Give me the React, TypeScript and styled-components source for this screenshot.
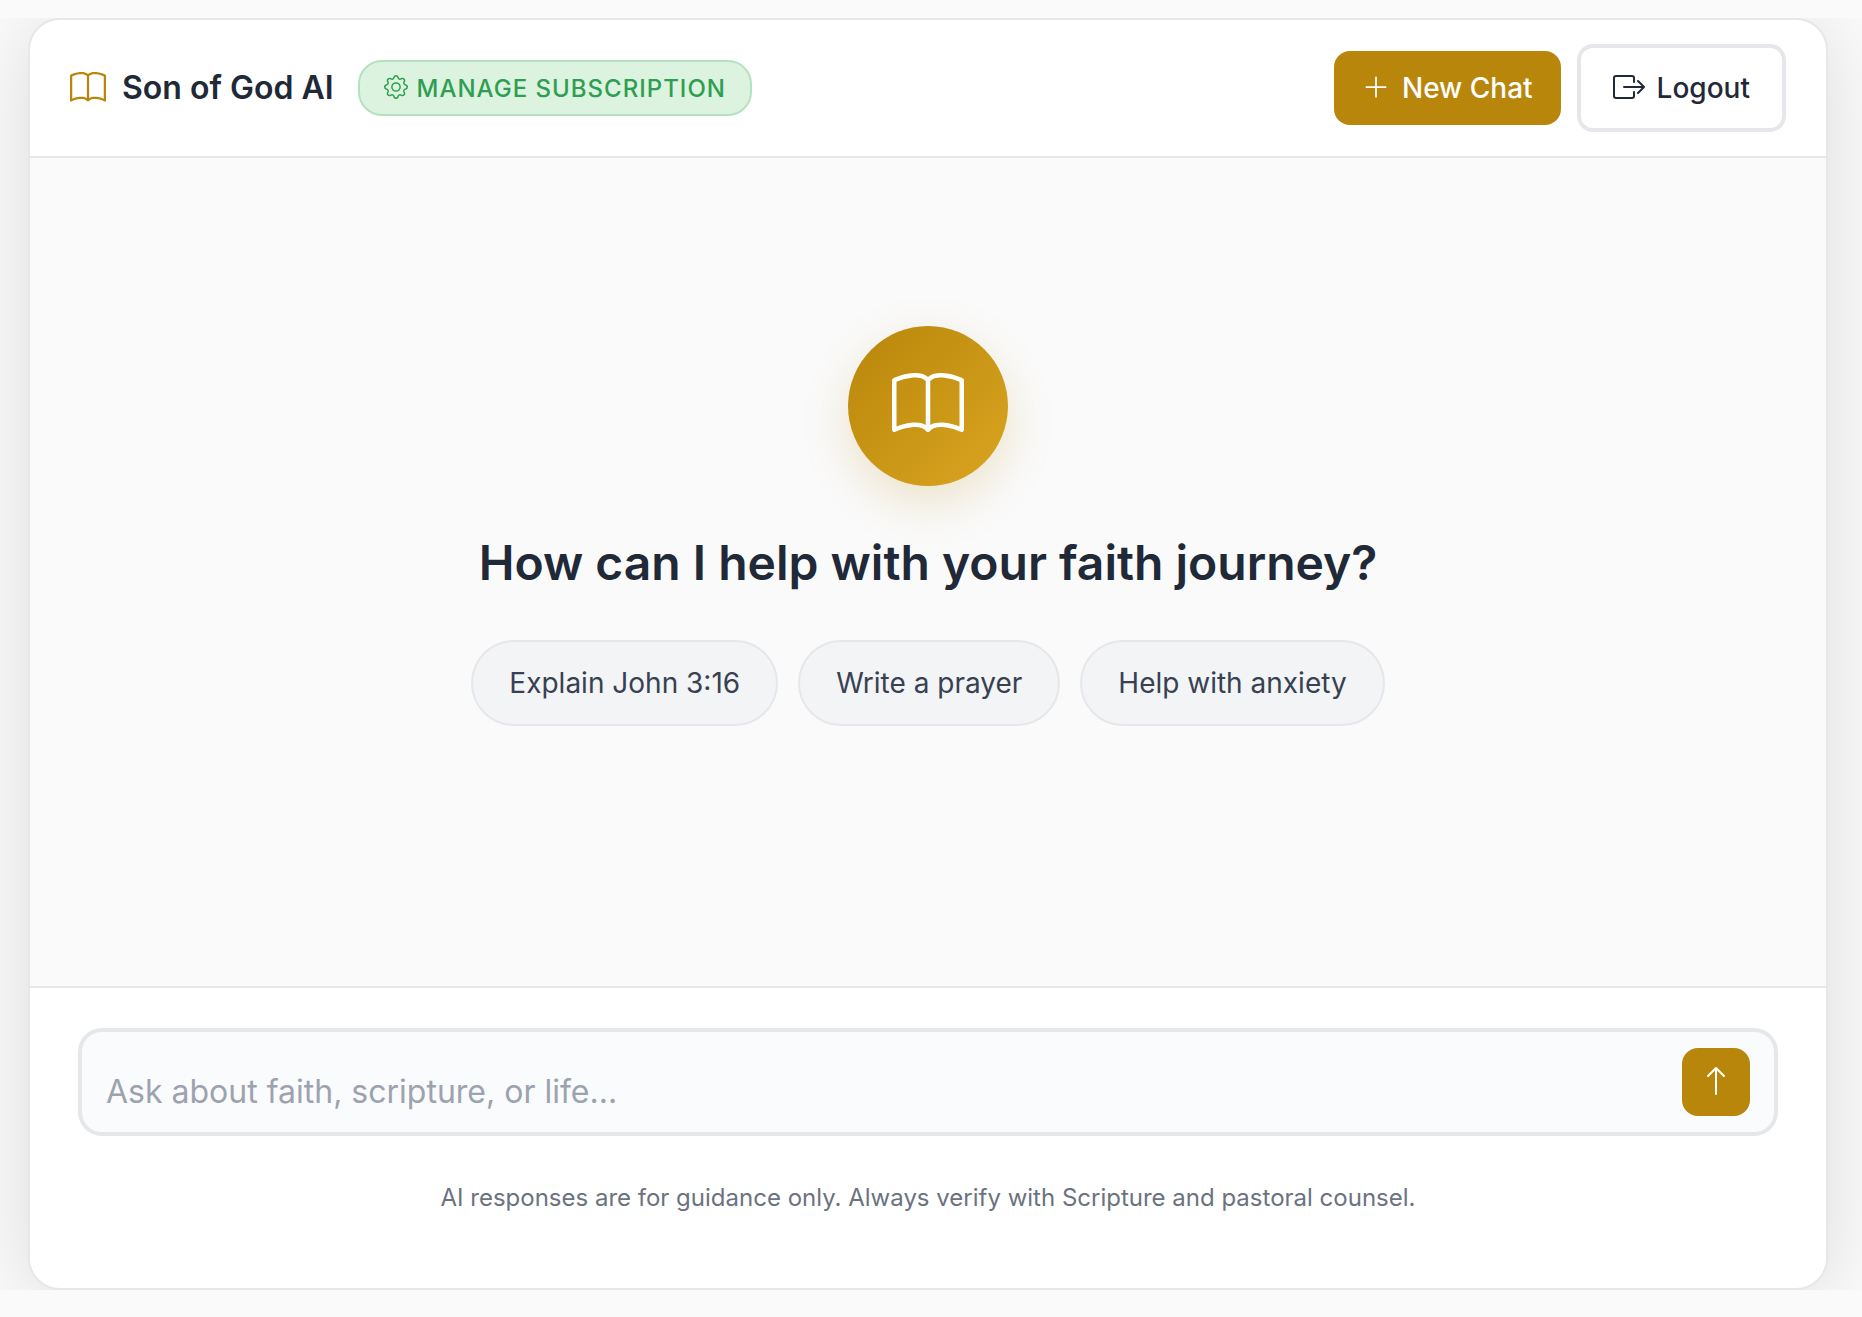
import React, { useState } from "react";
import styled, { createGlobalStyle } from "styled-components";
import { BsArrowUp, BsBook, BsBoxArrowRight, BsGear, BsPlusLg } from "react-icons/bs";

const GlobalStyle = createGlobalStyle`
  *, *::before, *::after { box-sizing: border-box; }
  body {
    margin: 0;
    background: #fafafa;
    color: #1f2937;
    font-family: Inter, "Liberation Sans", sans-serif;
  }
  button, textarea { font: inherit; }
`;

const Page = styled.div`
  display: flex;
  flex-direction: column;
  min-height: 100vh;
  padding: 18px 0 27px;
`;

const Stage = styled.div`
  flex: 1;
  display: flex;
  padding: 0 34px 0 28px;
  overflow: hidden;
`;

const Card = styled.div`
  flex: 1;
  min-width: 0;
  display: flex;
  flex-direction: column;
  border: 2px solid #e5e7eb;
  border-radius: 32px;
  background: #ffffff;
  box-shadow: 0 8px 80px rgba(0, 0, 0, 0.12);
  overflow: hidden;
`;

const Header = styled.header`
  display: flex;
  align-items: center;
  justify-content: space-between;
  flex-wrap: wrap;
  gap: 16px;
  padding: 24px 40px;
  border-bottom: 2px solid #e5e7eb;
`;

const HeaderGroup = styled.div<{ $gap: number }>`
  display: flex;
  align-items: center;
  gap: ${({ $gap }) => $gap}px;

  button svg { margin-bottom: 2px; }
`;

const Brand = styled.div`
  display: flex;
  align-items: center;
  gap: 16px;

  svg { color: #b8860b; }
`;

const BrandName = styled.h1`
  margin: 0;
  font-size: 32px;
  line-height: 40px;
  font-weight: 600;
`;

const SubscriptionButton = styled.button`
  display: flex;
  align-items: center;
  gap: 9px;
  height: 56px;
  padding: 0 24px;
  border: 2px solid #b4e2c1;
  border-radius: 24px;
  background: #dcf4df;
  color: #2f9e51;
  font-size: 24px;
  font-weight: 500;
  letter-spacing: 1px;
  text-transform: uppercase;
  cursor: pointer;
`;

const ActionButton = styled.button<{ $outlined?: boolean }>`
  display: flex;
  align-items: center;
  gap: 12px;
  padding: ${({ $outlined }) => ($outlined ? "20px 32px" : "17px 28px")};
  border: ${({ $outlined }) => ($outlined ? "4px solid #e5e7eb" : "0")};
  border-radius: 16px;
  background: ${({ $outlined }) => ($outlined ? "#ffffff" : "#b8860b")};
  color: ${({ $outlined }) => ($outlined ? "#1f2937" : "#ffffff")};
  font-size: 28px;
  line-height: 40px;
  font-weight: 500;
  cursor: pointer;
`;

const Welcome = styled.main`
  flex: 1;
  display: flex;
  flex-direction: column;
  align-items: center;
  justify-content: center;
  padding: 48px 40px 140px;
  background: #fafafa;
`;

const Emblem = styled.div`
  display: grid;
  place-items: center;
  width: 160px;
  height: 160px;
  border-radius: 50%;
  background: linear-gradient(135deg, #b8860b, #daa520);
  box-shadow: 0 16px 48px rgba(184, 134, 11, 0.2);
  color: #ffffff;

  svg { margin-bottom: 2px; }
`;

const Question = styled.h2`
  margin: 48px 0;
  font-size: 48px;
  line-height: 58px;
  font-weight: 600;
  text-align: center;
`;

const Suggestions = styled.div`
  display: flex;
  flex-wrap: wrap;
  justify-content: center;
  gap: 20px;
`;

const Suggestion = styled.button`
  padding: 20px 36px;
  border: 2px solid #e5e7eb;
  border-radius: 48px;
  background: #f3f4f6;
  color: #374151;
  font-size: 28px;
  line-height: 42px;
  cursor: pointer;
`;

const Footer = styled.footer`
  padding: 40px 48px 72px;
  border-top: 2px solid #e5e7eb;
`;

const Composer = styled.form`
  display: flex;
  align-items: center;
  gap: 24px;
  padding: 16px 24px;
  border: 4px solid #e5e7eb;
  border-radius: 24px;
  background: #fafbfd;
`;

const MessageBox = styled.textarea`
  flex: 1;
  min-width: 0;
  height: 68px;
  padding: 20px 0 0;
  border: 0;
  outline: 0;
  background: transparent;
  color: #1f2937;
  font-size: 32px;
  line-height: 48px;
  resize: none;
  overflow: hidden;

  &::placeholder {
    color: #9ca3af;
    opacity: 1;
  }
`;

const SendButton = styled.button`
  display: grid;
  place-items: center;
  width: 68px;
  height: 68px;
  padding: 0;
  border: 0;
  border-radius: 16px;
  background: #b8860b;
  color: #ffffff;
  cursor: pointer;

  svg { margin-bottom: 2px; }
`;

const Disclaimer = styled.p`
  margin: 44px 0 0;
  color: #6b7280;
  font-size: 24px;
  line-height: 36px;
  text-align: center;
`;

const suggestions = ["Explain John 3:16", "Write a prayer", "Help with anxiety"];

export default function App() {
  const [message, setMessage] = useState("");

  return (
    <>
      <GlobalStyle />
      <Page>
        <Stage>
          <Card>
            <Header>
              <HeaderGroup $gap={24}>
                <Brand>
                  <BsBook size={36} aria-hidden />
                  <BrandName>Son of God AI</BrandName>
                </Brand>
                <SubscriptionButton type="button">
                  <BsGear size={24} aria-hidden />
                  Manage Subscription
                </SubscriptionButton>
              </HeaderGroup>
              <HeaderGroup $gap={16}>
                <ActionButton type="button" onClick={() => setMessage("")}>
                  <BsPlusLg size={28} aria-hidden />
                  New Chat
                </ActionButton>
                <ActionButton type="button" $outlined>
                  <BsBoxArrowRight size={32} aria-hidden />
                  Logout
                </ActionButton>
              </HeaderGroup>
            </Header>

            <Welcome>
              <Emblem>
                <BsBook size={72} aria-hidden />
              </Emblem>
              <Question>How can I help with your faith journey?</Question>
              <Suggestions>
                {suggestions.map((text) => (
                  <Suggestion key={text} type="button" onClick={() => setMessage(text)}>
                    {text}
                  </Suggestion>
                ))}
              </Suggestions>
            </Welcome>

            <Footer>
              <Composer onSubmit={(event) => event.preventDefault()}>
                <MessageBox
                  aria-label="Message"
                  rows={1}
                  placeholder="Ask about faith, scripture, or life..."
                  value={message}
                  onChange={(event) => setMessage(event.target.value)}
                />
                <SendButton type="submit" aria-label="Send">
                  <BsArrowUp size={32} aria-hidden />
                </SendButton>
              </Composer>
              <Disclaimer>
                AI responses are for guidance only. Always verify with Scripture and pastoral counsel.
              </Disclaimer>
            </Footer>
          </Card>
        </Stage>
      </Page>
    </>
  );
}
